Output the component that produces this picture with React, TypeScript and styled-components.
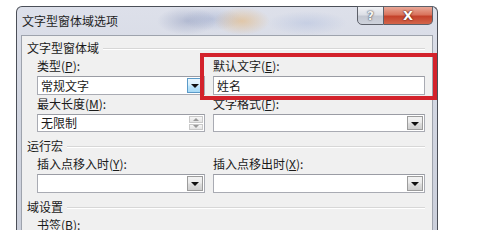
import React from 'react';
import styled, { createGlobalStyle, css } from 'styled-components';

const Global = createGlobalStyle`
  html, body { margin: 0; padding: 0; background: #ffffff; }
  body {
    font-family: "Noto Sans CJK SC", "Noto Sans", sans-serif;
    font-size: 12px;
    color: #1a1a1a;
    overflow: hidden;
  }
  u { text-decoration: underline; text-underline-offset: 1px; }
`;

const Page = styled.div`
  width: 482px;
  height: 230px;
  overflow: hidden;
  padding: 6px 0 0 16px;
  box-sizing: border-box;
`;

const Window = styled.div`
  width: 422px;
  height: 260px;
  box-sizing: border-box;
  border: 1px solid #4b4f58;
  border-bottom: none;
  border-radius: 6px 6px 0 0;
  background:
    radial-gradient(ellipse 30px 14px at 170px 14px, rgba(110, 125, 170, 0.35), transparent),
    radial-gradient(ellipse 28px 14px at 225px 14px, rgba(230, 170, 90, 0.45), transparent),
    radial-gradient(ellipse 30px 12px at 195px 12px, rgba(120, 140, 190, 0.3), transparent),
    radial-gradient(ellipse 40px 12px at 290px 16px, rgba(150, 170, 215, 0.3), transparent),
    linear-gradient(180deg, #dde0ea 0%, #d2d6e1 40%, #c9cdd9 100%);
  display: flex;
  flex-direction: column;
`;

const TitleBar = styled.div`
  height: 28px;
  display: flex;
  align-items: center;
  justify-content: space-between;
  padding-left: 5px;
  padding-right: 4px;
`;

const Title = styled.div`
  font-size: 12px;
  line-height: 16px;
  color: #1e1e1e;
  letter-spacing: 0;
`;

const Caption = styled.div`
  align-self: flex-start;
  display: flex;
  margin-top: -1px;
`;

const CapButton = styled.div<{ $close?: boolean }>`
  height: 19px;
  box-sizing: border-box;
  display: flex;
  align-items: center;
  justify-content: center;
  font-family: "DejaVu Sans", sans-serif;
  font-weight: bold;
  font-size: 12px;
  color: #ffffff;
  border: 1px solid #5d6069;
  ${({ $close }) =>
    $close
      ? css`
          width: 49px;
          border-left: none;
          border-radius: 0 0 5px 0;
          background: linear-gradient(180deg, #e9a898 0%, #d9745d 45%, #c4422b 55%, #d3654b 100%);
          text-shadow: 0 0 2px #5a1a10, 0 0 1px #5a1a10;
          font-size: 13px;
        `
      : css`
          width: 27px;
          border-radius: 0 0 0 5px;
          background: linear-gradient(180deg, #f2f3f6 0%, #dcdfe6 45%, #c3c7d1 55%, #cfd3dc 100%);
          color: #f4f4f4;
          text-shadow: 0 0 2px #4a4d55, 0 0 1px #4a4d55;
        `}
`;

const Body = styled.div`
  flex: 1;
  padding: 0 4px;
  display: flex;
`;

const Panel = styled.div`
  flex: 1;
  background: #f0f0f0;
  border: 1px solid #9ea3ad;
  border-bottom: none;
  padding: 3px 7px 0 5px;
  display: flex;
  flex-direction: column;
`;

const GroupHeader = styled.div<{ $first?: boolean }>`
  display: flex;
  align-items: center;
  gap: 4px;
  height: 18px;
  line-height: 18px;
  margin-top: ${({ $first }) => ($first ? '0' : '5px')};
  &::after {
    content: '';
    flex: 1;
    height: 1px;
    background: #d7d7d7;
    box-shadow: 0 1px 0 #ffffff;
    margin-top: 1px;
  }
`;

const FieldGrid = styled.div`
  display: grid;
  grid-template-columns: 168px 212px;
  column-gap: 8px;
  margin-left: 10px;
`;

const Field = styled.div<{ $marked?: boolean }>`
  position: relative;
  display: flex;
  flex-direction: column;
  ${({ $marked }) =>
    $marked &&
    css`
      &::after {
        content: '';
        position: absolute;
        left: -13px;
        right: -12px;
        top: -4px;
        bottom: -5px;
        border: 4px solid #d3222b;
        z-index: 2;
        pointer-events: none;
      }
    `}
`;

const Label = styled.div`
  height: 18px;
  line-height: 18px;
  white-space: nowrap;
`;

const Box = styled.div<{ $h?: number }>`
  margin-top: 1px;
  height: ${({ $h }) => $h ?? 19}px;
  box-sizing: border-box;
  border: 1px solid #a9abb3;
  border-top-color: #9a9ca4;
  background: #ffffff;
  display: flex;
  align-items: stretch;
`;

const BoxText = styled.div`
  flex: 1;
  padding-left: 3px;
  line-height: 16px;
  font-size: 12px;
  display: flex;
  align-items: center;
`;

const DropButton = styled.div<{ $hot?: boolean }>`
  width: 16px;
  margin: 1px;
  box-sizing: border-box;
  display: flex;
  align-items: center;
  justify-content: center;
  border: 1px solid ${({ $hot }) => ($hot ? '#5b9ac8' : '#9c9c9c')};
  background: ${({ $hot }) =>
    $hot
      ? 'linear-gradient(180deg, #eaf6fd 0%, #d9f0fc 45%, #bee6fd 55%, #a7d9f5 100%)'
      : 'linear-gradient(180deg, #f2f2f2 0%, #ebebeb 45%, #dddddd 55%, #cfcfcf 100%)'};
  &::before {
    content: '';
    width: 0;
    height: 0;
    border-left: 4px solid transparent;
    border-right: 4px solid transparent;
    border-top: 4px solid #111111;
    margin-top: 1px;
  }
`;

const Spin = styled.div`
  width: 14px;
  margin: 1px;
  display: flex;
  flex-direction: column;
  gap: 1px;
`;

const SpinHalf = styled.div<{ $up?: boolean }>`
  flex: 1;
  box-sizing: border-box;
  border: 1px solid #c9c9c9;
  background: linear-gradient(180deg, #f6f6f6, #e4e4e4);
  display: flex;
  align-items: center;
  justify-content: center;
  &::before {
    content: '';
    width: 0;
    height: 0;
    border-left: 3px solid transparent;
    border-right: 3px solid transparent;
    ${({ $up }) =>
      $up ? 'border-bottom: 3px solid #9a9a9a;' : 'border-top: 3px solid #9a9a9a;'}
  }
`;

export default function App() {
  return (
    <>
      <Global />
      <Page>
        <Window>
          <TitleBar>
            <Title>文字型窗体域选项</Title>
            <Caption>
              <CapButton>?</CapButton>
              <CapButton $close>X</CapButton>
            </Caption>
          </TitleBar>
          <Body>
            <Panel>
              <GroupHeader $first>文字型窗体域</GroupHeader>
              <FieldGrid>
                <Field>
                  <Label>类型(<u>P</u>):</Label>
                  <Box>
                    <BoxText>常规文字</BoxText>
                    <DropButton $hot />
                  </Box>
                </Field>
                <Field $marked>
                  <Label>默认文字(<u>E</u>):</Label>
                  <Box>
                    <BoxText>姓名</BoxText>
                  </Box>
                </Field>
                <Field>
                  <Label>最大长度(<u>M</u>):</Label>
                  <Box $h={18}>
                    <BoxText>无限制</BoxText>
                    <Spin>
                      <SpinHalf $up />
                      <SpinHalf />
                    </Spin>
                  </Box>
                </Field>
                <Field>
                  <Label>文字格式(<u>F</u>):</Label>
                  <Box $h={18}>
                    <BoxText />
                    <DropButton />
                  </Box>
                </Field>
              </FieldGrid>
              <GroupHeader>运行宏</GroupHeader>
              <FieldGrid>
                <Field>
                  <Label>插入点移入时(<u>Y</u>):</Label>
                  <Box>
                    <BoxText />
                    <DropButton />
                  </Box>
                </Field>
                <Field>
                  <Label>插入点移出时(<u>X</u>):</Label>
                  <Box>
                    <BoxText />
                    <DropButton />
                  </Box>
                </Field>
              </FieldGrid>
              <GroupHeader>域设置</GroupHeader>
              <FieldGrid>
                <Field>
                  <Label>书签(<u>B</u>):</Label>
                </Field>
              </FieldGrid>
            </Panel>
          </Body>
        </Window>
      </Page>
    </>
  );
}
